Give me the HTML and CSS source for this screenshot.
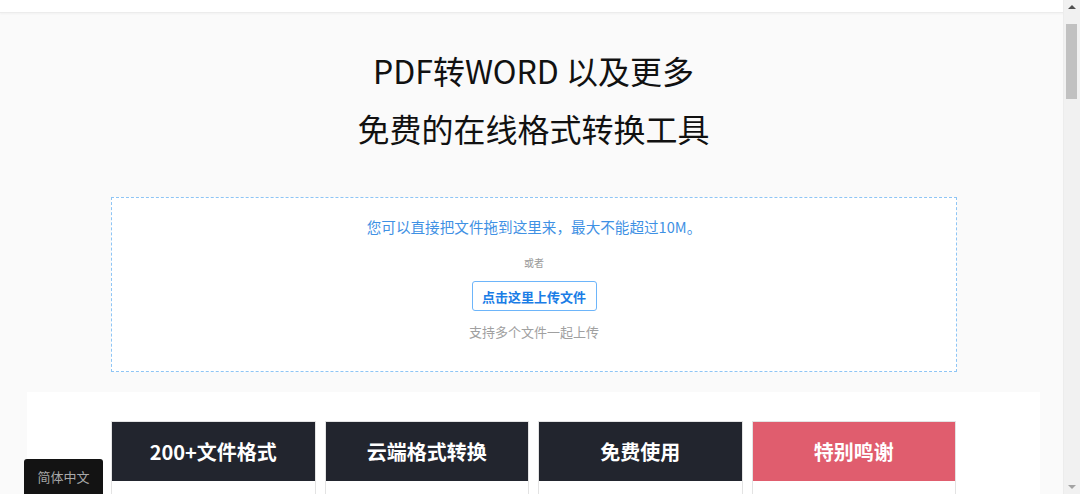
FILE: index.html
```html
<!DOCTYPE html>
<html lang="zh-CN">
<head>
<meta charset="utf-8">
<title>PDF转WORD 以及更多</title>
<link rel="stylesheet" href="styles.css">
</head>
<body>
<header class="topbar"></header>
<main class="page">
  <section class="hero">
    <h1 class="title">PDF转WORD 以及更多<br>免费的在线格式转换工具</h1>
    <div class="dropzone">
      <p class="drop-tip">您可以直接把文件拖到这里来，最大不能超过10M。</p>
      <p class="or">或者</p>
      <button class="upload-btn" type="button">点击这里上传文件</button>
      <p class="multi">支持多个文件一起上传</p>
    </div>
  </section>
  <section class="features">
    <div class="cards">
      <div class="card"><div class="card-head">200+文件格式</div><div class="card-body"></div></div>
      <div class="card"><div class="card-head">云端格式转换</div><div class="card-body"></div></div>
      <div class="card"><div class="card-head">免费使用</div><div class="card-body"></div></div>
      <div class="card"><div class="card-head card-head-red">特别鸣谢</div><div class="card-body"></div></div>
    </div>
  </section>
</main>
<div class="lang">简体中文</div>
<div class="scrollbar" aria-hidden="true">
  <span class="sb-arrow sb-up"></span>
  <span class="sb-thumb"></span>
  <span class="sb-arrow sb-down"></span>
</div>
</body>
</html>
```
FILE: styles.css
```css
html, body {
  margin: 0;
  padding: 0;
}
body {
  background: #fafafa;
  font-family: "Noto Sans CJK SC", "Noto Sans", "Liberation Sans", sans-serif;
  color: #111;
}
.topbar {
  height: 12px;
  background: #fff;
  border-bottom: 1px solid #ececec;
  box-shadow: 0 1px 2px rgba(0,0,0,0.04);
}
.page {
  width: 1013px;
  margin-left: 27px;
}
.hero {
  padding-top: 28px;
  padding-bottom: 20px;
}
.title {
  margin: 0;
  text-align: center;
  font-size: 32px;
  font-weight: 400;
  line-height: 58px;
  color: #111;
}
.dropzone {
  margin: 40px 83px 0 84px;
  height: 175px;
  box-sizing: border-box;
  border: 1px dashed #8ec5f5;
  background: #fff;
  padding-top: 19px;
  display: flex;
  flex-direction: column;
  align-items: center;
}
.dropzone p {
  margin: 0;
}
.drop-tip {
  font-size: 14.6px;
  line-height: 20px;
  color: #3f91e4;
}
.or {
  margin-top: 19px !important;
  font-size: 10px;
  line-height: 14px;
  color: #999;
}
.upload-btn {
  margin-top: 11px;
  width: 125px;
  height: 30px;
  background: #fff;
  border: 1px solid #6db5fa;
  border-radius: 3px;
  font-family: inherit;
  font-size: 13px;
  font-weight: 700;
  color: #1a7de6;
  padding: 0;
}
.multi {
  margin-top: 12px !important;
  font-size: 13px;
  line-height: 18px;
  color: #a0a0a0;
}
.features {
  background: #fff;
  padding: 29px 84px 40px;
}
.cards {
  display: grid;
  grid-template-columns: repeat(4, 1fr);
  gap: 9px;
}
.card {
  border: 1px solid #e3e3e3;
  background: #fff;
}
.card-head {
  height: 59px;
  background: #22252e;
  color: #fff;
  font-size: 20px;
  font-weight: 700;
  display: flex;
  align-items: center;
  justify-content: center;
}
.card-head-red {
  background: #e05d6e;
}
.card-body {
  height: 220px;
}
.lang {
  position: fixed;
  left: 24px;
  bottom: 0;
  width: 79px;
  height: 35px;
  background: #131313;
  border-radius: 3px 3px 0 0;
  color: #a8a8a8;
  font-size: 13px;
  display: flex;
  align-items: center;
  justify-content: center;
}
.scrollbar {
  position: fixed;
  top: 0;
  right: 0;
  bottom: 0;
  width: 17px;
  background: #f1f1f1;
  border-left: 1px solid #ececec;
  box-sizing: border-box;
}
.sb-arrow {
  position: absolute;
  left: 4px;
  width: 0;
  height: 0;
  border-left: 4px solid transparent;
  border-right: 4px solid transparent;
}
.sb-up {
  top: 5px;
  border-bottom: 4px solid #505050;
}
.sb-down {
  bottom: 5px;
  border-top: 4px solid #a3a3a3;
}
.sb-thumb {
  position: absolute;
  top: 24px;
  left: 2px;
  width: 11px;
  height: 75px;
  background: #c1c1c1;
}
```
